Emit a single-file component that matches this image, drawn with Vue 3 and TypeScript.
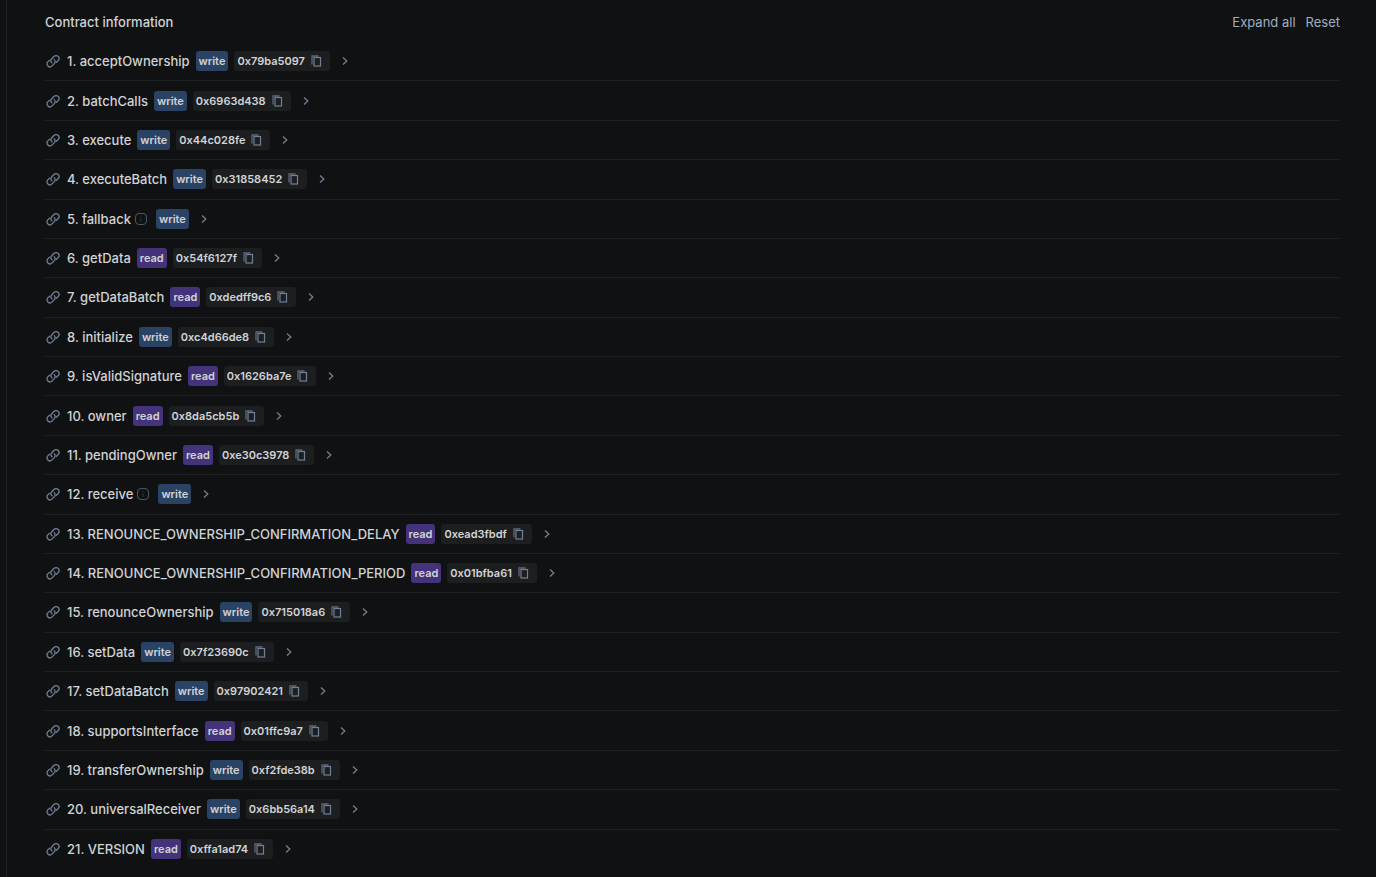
<script setup lang="ts">
interface Method {
  name: string
  kind: 'read' | 'write'
  selector?: string
}

const methods: Method[] = [
  { name: 'acceptOwnership', kind: 'write', selector: '0x79ba5097' },
  { name: 'batchCalls', kind: 'write', selector: '0x6963d438' },
  { name: 'execute', kind: 'write', selector: '0x44c028fe' },
  { name: 'executeBatch', kind: 'write', selector: '0x31858452' },
  { name: 'fallback', kind: 'write' },
  { name: 'getData', kind: 'read', selector: '0x54f6127f' },
  { name: 'getDataBatch', kind: 'read', selector: '0xdedff9c6' },
  { name: 'initialize', kind: 'write', selector: '0xc4d66de8' },
  { name: 'isValidSignature', kind: 'read', selector: '0x1626ba7e' },
  { name: 'owner', kind: 'read', selector: '0x8da5cb5b' },
  { name: 'pendingOwner', kind: 'read', selector: '0xe30c3978' },
  { name: 'receive', kind: 'write' },
  { name: 'RENOUNCE_OWNERSHIP_CONFIRMATION_DELAY', kind: 'read', selector: '0xead3fbdf' },
  { name: 'RENOUNCE_OWNERSHIP_CONFIRMATION_PERIOD', kind: 'read', selector: '0x01bfba61' },
  { name: 'renounceOwnership', kind: 'write', selector: '0x715018a6' },
  { name: 'setData', kind: 'write', selector: '0x7f23690c' },
  { name: 'setDataBatch', kind: 'write', selector: '0x97902421' },
  { name: 'supportsInterface', kind: 'read', selector: '0x01ffc9a7' },
  { name: 'transferOwnership', kind: 'write', selector: '0xf2fde38b' },
  { name: 'universalReceiver', kind: 'write', selector: '0x6bb56a14' },
  { name: 'VERSION', kind: 'read', selector: '0xffa1ad74' },
]

const copy = (text: string) => navigator.clipboard?.writeText(text)
</script>

<template>
  <main class="panel">
    <header class="head">
      <h1>Contract information</h1>
      <div class="actions">
        <button type="button">Expand all</button>
        <button type="button">Reset</button>
      </div>
    </header>
    <ol class="methods">
      <li v-for="(m, i) in methods" :key="m.name" class="method">
        <button type="button" class="icon link" :aria-label="`Copy link to ${m.name}`">
          <svg width="14" height="14" viewBox="0 0 14 14" fill="none" stroke="currentColor" stroke-width="1.3" stroke-linecap="round">
            <path d="M5.9 8.8A2.9 2.9 0 0 1 5.7 4.8L7.9 2.5A2.9 2.9 0 0 1 12.2 6.5L10.4 8.3" />
            <path d="M8.1 5.6A2.9 2.9 0 0 1 8.3 9.6L6.1 11.9A2.9 2.9 0 0 1 1.8 7.9L3.6 6.1" />
          </svg>
        </button>
        <span class="name">{{ i + 1 }}. {{ m.name }}</span>
        <button v-if="!m.selector" type="button" class="icon info" :aria-label="`About ${m.name}`">
          <svg width="12" height="12" viewBox="0 0 12 12" fill="none" stroke="currentColor">
            <rect x="0.5" y="0.5" width="11" height="11" rx="3.5" />
            <path d="M6 3v1M5.5 5.5H6V9" opacity="0.5" />
          </svg>
        </button>
        <span class="tag" :class="m.kind">{{ m.kind }}</span>
        <span v-if="m.selector" class="selector">
          {{ m.selector }}
          <button type="button" class="icon" :aria-label="`Copy ${m.selector}`" @click="copy(m.selector)">
            <svg width="11" height="12" viewBox="0 0 11 12" fill="none" stroke="currentColor">
              <path d="M1 9.5V1H7.5" stroke-width="1.3" opacity="0.75" />
              <rect x="3" y="2.5" width="6.5" height="8.5" stroke-width="1.2" />
            </svg>
          </button>
        </span>
        <button type="button" class="icon chevron" :aria-label="`Expand ${m.name}`">
          <svg width="6" height="8" viewBox="0 0 6 8" fill="none" stroke="currentColor" stroke-width="1.3">
            <path d="M1 0.5L4.8 4L1 7.5" />
          </svg>
        </button>
      </li>
    </ol>
  </main>
</template>

<style>
body {
  background: #101112;
}
</style>

<style scoped>
.panel {
  box-sizing: border-box;
  display: flex;
  flex-direction: column;
  min-height: 100vh;
  margin-left: 6px;
  padding: 12px 36px 8px 38px;
  border-left: 1px solid #1f2022;
  color: #d1d3d5;
  font: 500 13px/20px Inter, sans-serif;
}
.head {
  display: flex;
  justify-content: space-between;
  margin-bottom: 10px;
}
h1 {
  margin: 0;
  font: inherit;
}
.actions {
  display: flex;
  gap: 10px;
}
button {
  padding: 0;
  border: 0;
  background: none;
  color: #a0aec0;
  font: inherit;
  font-weight: 400;
  cursor: pointer;
}
.methods {
  flex: 1;
  display: flex;
  flex-direction: column;
  margin: 0;
  padding: 0;
  list-style: none;
}
.method {
  flex: 1;
  display: flex;
  align-items: center;
  padding-left: 1px;
  border-bottom: 1px solid #202123;
}
.method:last-child {
  border-bottom-color: transparent;
}
.icon {
  display: flex;
  flex: none;
  color: #718096;
}
.name {
  margin-left: 7px;
}
.info {
  margin-left: 4px;
  margin-right: 3px;
  color: #4a5568;
}
.tag,
.selector {
  margin-left: 6px;
  padding: 0 3px;
  border-radius: 3px;
  font-size: 11px;
  font-weight: 600;
}
.write {
  background: #2a4365;
}
.read {
  background: #44337a;
}
.selector {
  display: flex;
  align-items: center;
  gap: 6px;
  padding-right: 8px;
  background: #1d1e20;
}
.chevron {
  margin-left: 12px;
}
</style>
